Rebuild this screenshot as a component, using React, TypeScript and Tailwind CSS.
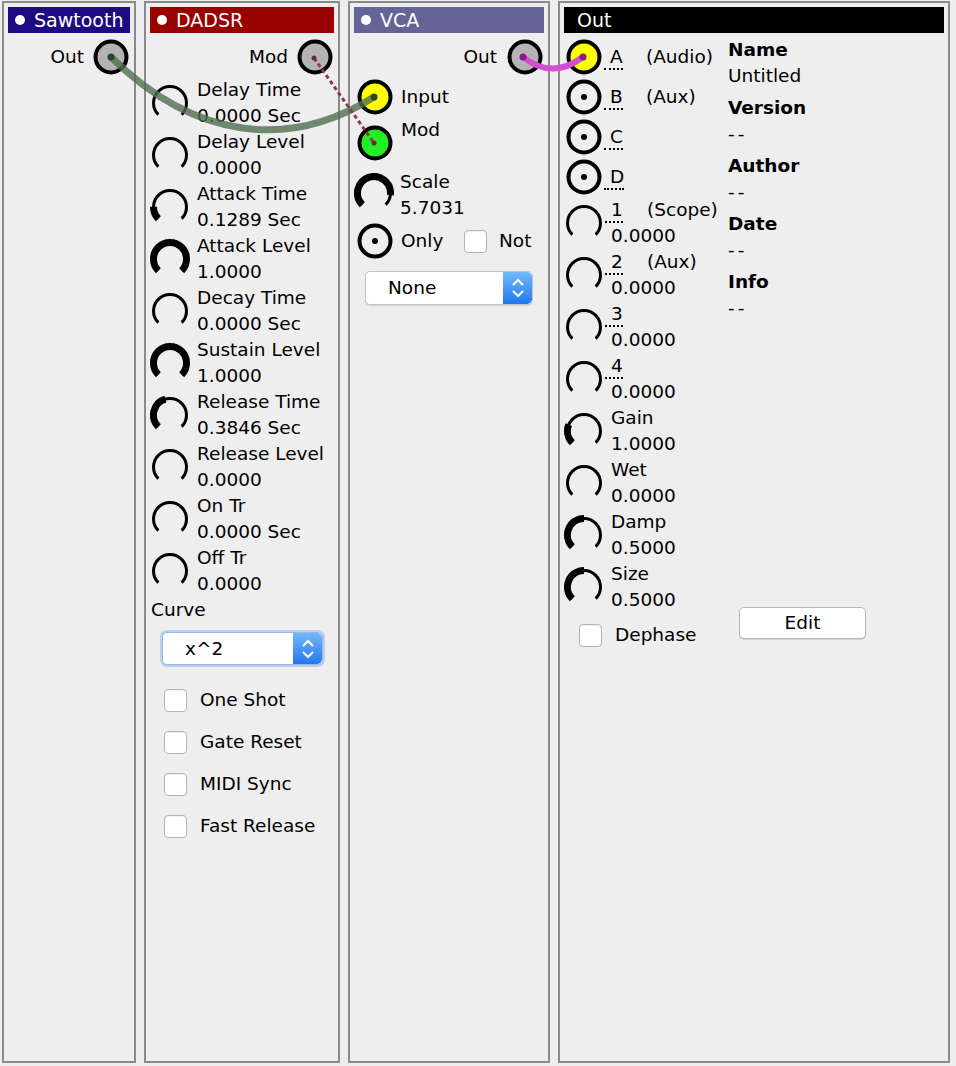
import type { ReactNode } from "react";

function Knob({ value }: { value: number }) {
  const r = 16.5;
  const c = 20;
  const pt = (deg: number) => {
    const a = (deg * Math.PI) / 180;
    return `${(c + r * Math.cos(a)).toFixed(2)} ${(c + r * Math.sin(a)).toFixed(2)}`;
  };
  const sweep = 270 * value;
  return (
    <svg width="40" height="40" viewBox="0 0 40 40" className="shrink-0">
      <path d={`M ${pt(135)} A ${r} ${r} 0 1 1 ${pt(45)}`} fill="none" stroke="#000" strokeWidth="3" />
      {value > 0 && (
        <path
          d={`M ${pt(135)} A ${r} ${r} 0 ${sweep > 180 ? 1 : 0} 1 ${pt(135 + sweep - (value >= 1 ? 0.01 : 0))}`}
          fill="none"
          stroke="#000"
          strokeWidth="7"
        />
      )}
    </svg>
  );
}

function Jack({ fill = "none", dot = false }: { fill?: string; dot?: boolean }) {
  return (
    <svg width="36" height="36" viewBox="0 0 36 36" className="shrink-0">
      <circle cx="18" cy="18" r="15.5" fill={fill} stroke="#000" strokeWidth="4" />
      {dot && <circle cx="18" cy="18" r="3" fill="#000" />}
    </svg>
  );
}

function Checkbox() {
  return <span className="block h-[23px] w-[23px] shrink-0 rounded-[4px] border border-[#b4b4b4] bg-white shadow-[inset_0_1px_1px_rgba(0,0,0,0.06)]" />;
}

function Stepper() {
  return (
    <span className="flex h-full w-[29px] items-center justify-center rounded-r-[5px] bg-gradient-to-b from-[#72b8fb] to-[#1f78ef]">
      <svg width="14" height="22" viewBox="0 0 14 22">
        <path d="M2 8 L7 3 L12 8" fill="none" stroke="#fff" strokeWidth="2" />
        <path d="M2 14 L7 19 L12 14" fill="none" stroke="#fff" strokeWidth="2" />
      </svg>
    </span>
  );
}

function Panel({ width, title, color, dot = true, children }: { width: string; title: string; color: string; dot?: boolean; children?: ReactNode }) {
  return (
    <div className={`${width} flex h-[1062px] shrink-0 flex-col border-2 border-[#8a8a8a] bg-[#eeeeee] p-1`}>
      <div className={`${color} flex h-[26px] shrink-0 items-center text-[19px] text-white`}>
        {dot ? (
          <>
            <span className="ml-[7px] h-[10px] w-[10px] rounded-full bg-white" />
            <span className="ml-[9px]">{title}</span>
          </>
        ) : (
          <span className="ml-[13px]">{title}</span>
        )}
      </div>
      {children}
    </div>
  );
}

function KnobRow({ value, label, reading }: { value: number; label: ReactNode; reading: string }) {
  return (
    <div className="flex h-[52px] items-center">
      <Knob value={value} />
      <div className="ml-[7px] leading-[26px]">
        <div className="flex">{label}</div>
        <div>{reading}</div>
      </div>
    </div>
  );
}

function Port({ name, note }: { name: string; note?: string }) {
  return (
    <>
      <span className="w-[36px] shrink-0">
        <span className="-ml-[6px] inline-block border-b-2 border-dotted border-black pl-[6px] leading-[22px]">{name}</span>
      </span>
      {note && <span>{note}</span>}
    </>
  );
}

const dadsr: [number, string, string][] = [
  [0, "Delay Time", "0.0000 Sec"],
  [0, "Delay Level", "0.0000"],
  [0.17, "Attack Time", "0.1289 Sec"],
  [1, "Attack Level", "1.0000"],
  [0, "Decay Time", "0.0000 Sec"],
  [1, "Sustain Level", "1.0000"],
  [0.44, "Release Time", "0.3846 Sec"],
  [0, "Release Level", "0.0000"],
  [0, "On Tr", "0.0000 Sec"],
  [0, "Off Tr", "0.0000"],
];

const info: [string, string][] = [
  ["Name", "Untitled"],
  ["Version", "--"],
  ["Author", "--"],
  ["Date", "--"],
  ["Info", "--"],
];

export default function App() {
  return (
    <div className="relative h-[1066px] w-[956px] overflow-hidden bg-[#eeeeee] font-['DejaVu_Sans',sans-serif] text-[18.5px] leading-[26px] text-black">
      <div className="flex gap-2 pl-[2px] pt-[1px]">
        <Panel width="w-[134px]" title="Sawtooth" color="bg-[#1e0a82]">
          <div className="mt-[6px] flex items-center justify-end">
            <span>Out</span>
            <span className="ml-[9px] mr-[1px]">
              <Jack fill="#b3b3b3" />
            </span>
          </div>
        </Panel>

        <Panel width="w-[196px]" title="DADSR" color="bg-[#990000]">
          <div className="mt-[6px] flex items-center justify-end">
            <span>Mod</span>
            <span className="ml-[9px] mr-[1px]">
              <Jack fill="#b3b3b3" />
            </span>
          </div>
          <div className="mt-[2px]">
            {dadsr.map(([v, l, r]) => (
              <KnobRow key={l} value={v} label={l} reading={r} />
            ))}
          </div>
          <div className="ml-[1px]">Curve</div>
          <div className="ml-[12px] mt-[9px] flex h-[33px] w-[161px] items-stretch rounded-[5px] border border-[#9cb8e0] bg-white shadow-[0_0_0_2px_rgba(120,170,240,0.45)]">
            <span className="flex flex-1 items-center pl-[22px]">x^2</span>
            <Stepper />
          </div>
          <div className="ml-[14px] mt-[14px]">
            {["One Shot", "Gate Reset", "MIDI Sync", "Fast Release"].map((t) => (
              <div key={t} className="flex h-[42px] items-center">
                <Checkbox />
                <span className="ml-[13px]">{t}</span>
              </div>
            ))}
          </div>
        </Panel>

        <Panel width="w-[202px]" title="VCA" color="bg-[#646496]">
          <div className="mt-[6px] flex items-center justify-end">
            <span>Out</span>
            <span className="ml-[10px] mr-[1px]">
              <Jack fill="#b3b3b3" />
            </span>
          </div>
          <div className="mt-[2px] flex h-[40px] items-center">
            <span className="ml-[3px]">
              <Jack fill="#ffff00" />
            </span>
            <span className="ml-[8px]">Input</span>
          </div>
          <div className="mt-[6px] flex h-[40px] items-center">
            <span className="ml-[3px]">
              <Jack fill="#22ee22" />
            </span>
            <span className="ml-[8px] self-start -mt-[6px]">Mod</span>
          </div>
          <div className="mt-[6px] flex h-[52px] items-start">
            <span className="mt-[4px]">
              <Knob value={0.86} />
            </span>
            <div className="ml-[6px]">
              <div>Scale</div>
              <div>5.7031</div>
            </div>
          </div>
          <div className="flex h-[40px] items-center">
            <span className="ml-[3px]">
              <Jack dot />
            </span>
            <span className="ml-[8px] w-[63px]">Only</span>
            <Checkbox />
            <span className="ml-[12px]">Not</span>
          </div>
          <div className="ml-[11px] mt-[10px] flex h-[34px] w-[168px] items-stretch rounded-[5px] border border-[#c4c4c4] bg-white shadow-[0_1px_1px_rgba(0,0,0,0.12)]">
            <span className="flex flex-1 items-center pl-[22px]">None</span>
            <Stepper />
          </div>
        </Panel>

        <Panel width="w-[392px]" title="Out" color="bg-black" dot={false}>
          <div className="mt-[4px] flex">
            <div className="w-[164px] shrink-0">
              {[
                ["A", "(Audio)", "#ffff00"],
                ["B", "(Aux)", ""],
                ["C", "", ""],
                ["D", "", ""],
              ].map(([n, note, fill]) => (
                <div key={n} className="flex h-[40px] items-center">
                  <span className="ml-[2px]">{fill ? <Jack fill={fill} /> : <Jack dot />}</span>
                  <span className="ml-[8px] flex items-center">
                    <Port name={n} note={note} />
                  </span>
                </div>
              ))}
              <KnobRow value={0} label={<Port name="1" note="(Scope)" />} reading="0.0000" />
              <KnobRow value={0} label={<Port name="2" note="(Aux)" />} reading="0.0000" />
              <KnobRow value={0} label={<Port name="3" />} reading="0.0000" />
              <KnobRow value={0} label={<Port name="4" />} reading="0.0000" />
              <KnobRow value={0.25} label="Gain" reading="1.0000" />
              <KnobRow value={0} label="Wet" reading="0.0000" />
              <KnobRow value={0.5} label="Damp" reading="0.5000" />
              <KnobRow value={0.5} label="Size" reading="0.5000" />
              <div className="mt-[1px] flex h-[42px] items-center">
                <span className="ml-[15px]">
                  <Checkbox />
                </span>
                <span className="ml-[13px]">Dephase</span>
              </div>
            </div>
            <div className="flex flex-col">
              {info.map(([k, v]) => (
                <div key={k} className="mb-[6px]">
                  <div className="font-bold">{k}</div>
                  <div className={v === "--" ? "tracking-[3px]" : ""}>{v}</div>
                </div>
              ))}
              <button className="ml-[11px] mt-[280px] flex h-[32px] w-[127px] items-center justify-center rounded-[5px] border border-[#b8b8b8] bg-white shadow-[0_1px_1px_rgba(0,0,0,0.12)]">
                Edit
              </button>
            </div>
          </div>
        </Panel>
      </div>

      <svg className="pointer-events-none absolute left-0 top-0" width="956" height="1066" viewBox="0 0 956 1066">
        <path d="M111 57 C195 140 290 150 374 97" fill="none" stroke="#4f6e4f" strokeOpacity="0.8" strokeWidth="7" />
        <circle cx="111" cy="57" r="3.5" fill="#2b452b" />
        <circle cx="374" cy="97" r="3.5" fill="#2b452b" />
        <path d="M314 58 L374 143" fill="none" stroke="#8e3a4a" strokeWidth="3" strokeDasharray="4 3" />
        <circle cx="314" cy="58" r="2.5" fill="#6e2a36" />
        <circle cx="374" cy="143" r="2.5" fill="#6e2a36" />
        <path d="M523 57 Q552 80 583 57" fill="none" stroke="#d24ed2" strokeWidth="6" />
        <circle cx="523" cy="57" r="3.5" fill="#8b1a8b" />
        <circle cx="583" cy="57" r="3.5" fill="#8b1a8b" />
      </svg>
    </div>
  );
}
